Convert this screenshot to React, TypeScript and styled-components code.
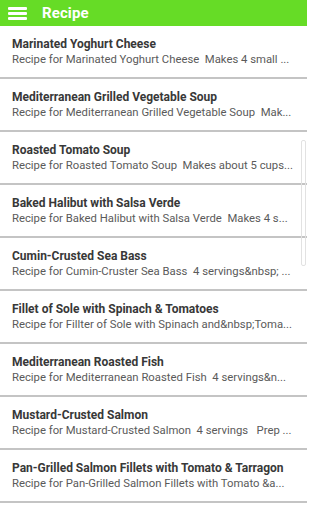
import styled, { createGlobalStyle } from 'styled-components';

const GlobalStyle = createGlobalStyle`
  html, body {
    margin: 0;
    padding: 0;
    background: #ffffff;
  }
  body {
    font-family: Roboto, "Liberation Sans", Arial, sans-serif;
    overflow: hidden;
  }
`;

const Screen = styled.div`
  position: relative;
  width: 307px;
  height: 512px;
  overflow: hidden;
  background: #fff;
`;

const Toolbar = styled.header`
  height: 26px;
  background: #66dc26;
  display: flex;
  align-items: center;
  padding-left: 8px;
  gap: 15px;
  box-sizing: border-box;
`;

const MenuIcon = styled.div`
  width: 19px;
  height: 13px;
  display: flex;
  flex-direction: column;
  justify-content: space-between;
  span {
    display: block;
    height: 3px;
    background: #fff;
    border-radius: 1px;
  }
`;

const Title = styled.h1`
  margin: 0;
  color: #fff;
  font-size: 15px;
  font-weight: 700;
  letter-spacing: 0.1px;
`;

const RecipeList = styled.ul`
  list-style: none;
  margin: 0;
  padding: 0;
`;

const Row = styled.li`
  height: 51px;
  border-bottom: 2px solid #c4c4c4;
  padding: 0 12px;
  display: flex;
  flex-direction: column;
  justify-content: center;
  gap: 2px;
`;

const RowTitle = styled.div`
  font-size: 12px;
  font-weight: 700;
  color: #383838;
  white-space: nowrap;
  overflow: hidden;
`;

const RowText = styled.div`
  font-size: 11.3px;
  color: #5a5a5a;
  white-space: nowrap;
  overflow: hidden;
  width: 284px;
`;

const ScrollThumb = styled.div`
  position: absolute;
  right: 1px;
  top: 140px;
  width: 3px;
  height: 124px;
  border: 1px solid #e2e2e2;
  border-radius: 2px;
`;

const recipes = [
  ['Marinated Yoghurt Cheese', 'Recipe for Marinated Yoghurt Cheese  Makes 4 small ...'],
  ['Mediterranean Grilled Vegetable Soup', 'Recipe for Mediterranean Grilled Vegetable Soup  Mak...'],
  ['Roasted Tomato Soup', 'Recipe for Roasted Tomato Soup  Makes about 5 cups...'],
  ['Baked Halibut with Salsa Verde', 'Recipe for Baked Halibut with Salsa Verde  Makes 4 s...'],
  ['Cumin-Crusted Sea Bass', 'Recipe for Cumin-Cruster Sea Bass  4 servings&nbsp; ...'],
  ['Fillet of Sole with Spinach & Tomatoes', 'Recipe for Fillter of Sole with Spinach and&nbsp;Toma...'],
  ['Mediterranean Roasted Fish', 'Recipe for Mediterranean Roasted Fish  4 servings&n...'],
  ['Mustard-Crusted Salmon', 'Recipe for Mustard-Crusted Salmon  4 servings   Prep ...'],
  ['Pan-Grilled Salmon Fillets with Tomato & Tarragon', 'Recipe for Pan-Grilled Salmon Fillets with Tomato &a...'],
];

export default function App() {
  return (
    <Screen>
      <GlobalStyle />
      <Toolbar>
        <MenuIcon>
          <span />
          <span />
          <span />
        </MenuIcon>
        <Title>Recipe</Title>
      </Toolbar>
      <RecipeList>
        {recipes.map(([name, text]) => (
          <Row key={name}>
            <RowTitle>{name}</RowTitle>
            <RowText>{text.replace(/ {2}/g, '\u00a0\u00a0')}</RowText>
          </Row>
        ))}
      </RecipeList>
      <ScrollThumb />
    </Screen>
  );
}
